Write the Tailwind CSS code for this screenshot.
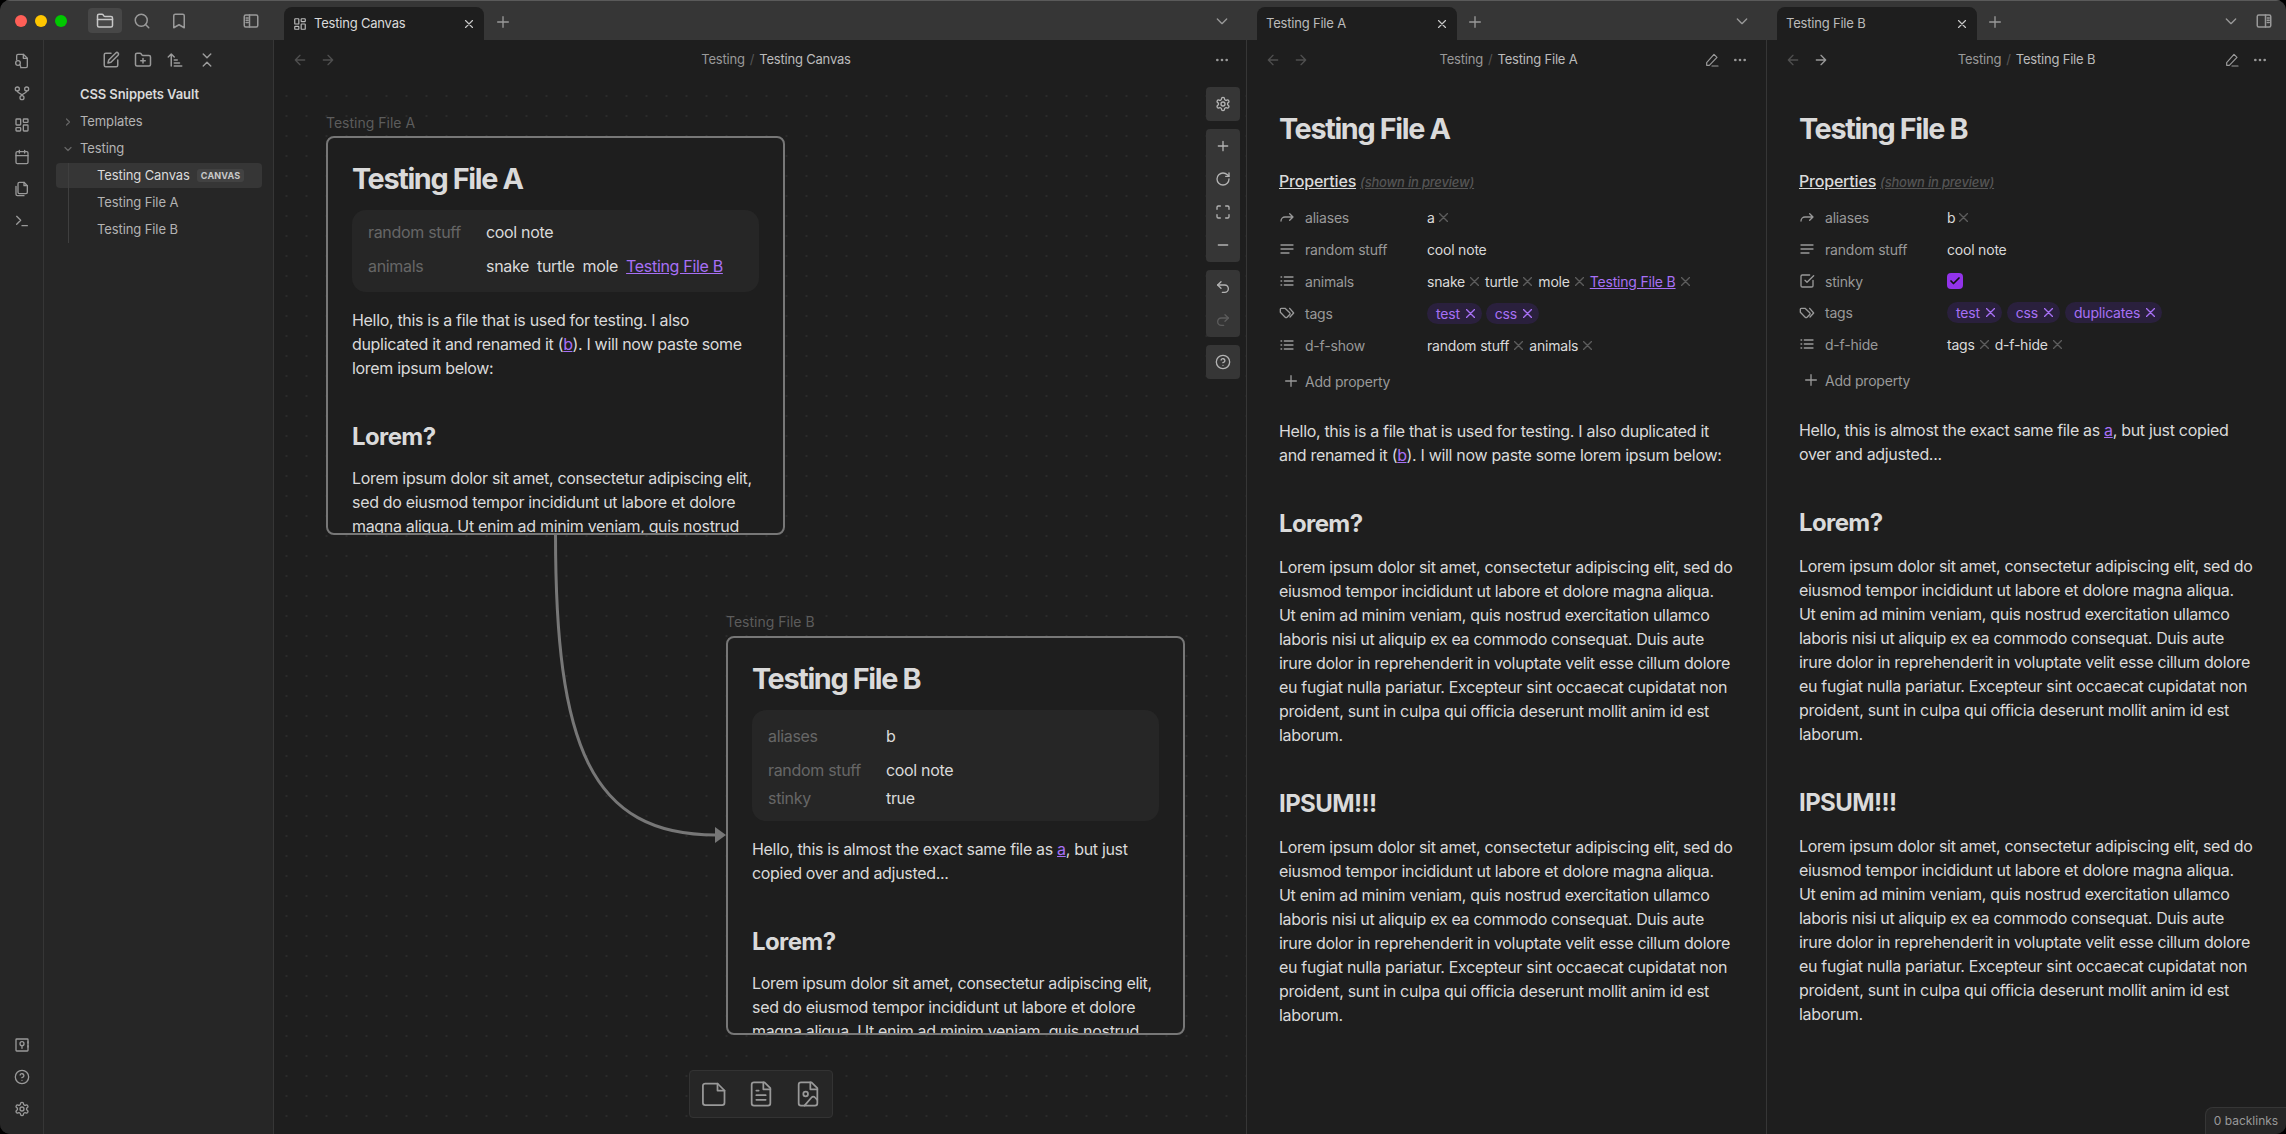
<!DOCTYPE html>
<html lang="en">
<head>
<meta charset="UTF-8">
<title>Testing Canvas - CSS Snippets Vault</title>
<script src="https://cdn.jsdelivr.net/npm/@tailwindcss/browser@4"></script>
</head>
<body class="bg-black [font-family:Inter,sans-serif] antialiased">
<div class="w-[2286px] h-[1134px] overflow-hidden flex flex-col rounded-[10px] bg-[#1e1e1e] text-[#dadada]">

  <!-- title bar -->
  <div class="h-[40px] shrink-0 flex bg-[#363636] border-t border-[#5a5a5a] tracking-[-0.2px]">
    <div class="w-[274px] shrink-0 flex items-center relative">
      <div class="flex gap-[8px] ml-[15px]">
        <span class="w-[12px] h-[12px] rounded-full bg-[#ff5f57]"></span>
        <span class="w-[12px] h-[12px] rounded-full bg-[#ffc700]"></span>
        <span class="w-[12px] h-[12px] rounded-full bg-[#00c800]"></span>
      </div>
      <div class="ml-[21px] w-[34px] h-[25px] rounded-[4px] bg-[#474747] flex items-center justify-center text-[#c8c8c8]">
        <svg class="w-[18px] h-[18px]" viewBox="0 0 24 24" fill="none" stroke="currentColor" stroke-width="2" stroke-linecap="round" stroke-linejoin="round"><path d="M20 20a2 2 0 0 0 2-2V8a2 2 0 0 0-2-2h-7.9a2 2 0 0 1-1.7-.9l-.8-1.2A2 2 0 0 0 7.9 3H4a2 2 0 0 0-2 2v13a2 2 0 0 0 2 2Z"/><path d="M2 10h20"/></svg>
      </div>
      <svg class="w-[18px] h-[18px] ml-[11px] text-[#999]" viewBox="0 0 24 24" fill="none" stroke="currentColor" stroke-width="2" stroke-linecap="round" stroke-linejoin="round"><circle cx="11" cy="11" r="8"/><path d="m21 21-4.3-4.3"/></svg>
      <svg class="w-[18px] h-[18px] ml-[19px] text-[#999]" viewBox="0 0 24 24" fill="none" stroke="currentColor" stroke-width="2" stroke-linecap="round" stroke-linejoin="round"><path d="m19 21-7-4-7 4V5a2 2 0 0 1 2-2h10a2 2 0 0 1 2 2v16z"/></svg>
      <svg class="w-[18px] h-[18px] ml-[54px] text-[#999]" viewBox="0 0 24 24" fill="none" stroke="currentColor" stroke-width="2" stroke-linecap="round" stroke-linejoin="round"><rect x="3" y="4" width="18" height="16" rx="2"/><path d="M10 4v16M5.500 8H8M5.500 11H8M5.500 14H8"/></svg>
    </div>
    <!-- canvas tabs -->
    <div class="w-[973px] shrink-0 flex items-end pl-[10px] relative">
      <div class="w-[200px] h-[33px] rounded-t-[8px] bg-[#1e1e1e] flex items-center pl-[9px] pr-[8px] text-[13px]">
        <svg class="w-[14px] h-[14px] text-[#bbb] mr-[7px]" viewBox="0 0 24 24" fill="none" stroke="currentColor" stroke-width="2" stroke-linecap="round" stroke-linejoin="round"><rect x="3" y="3" width="7" height="9" rx="1"/><rect x="14" y="3" width="7" height="5" rx="1"/><rect x="14" y="12" width="7" height="9" rx="1"/><rect x="3" y="16" width="7" height="5" rx="1"/></svg>
        <span class="flex-1">Testing Canvas</span>
        <svg class="w-[14px] h-[14px] text-[#c8c8c8]" viewBox="0 0 24 24" fill="none" stroke="currentColor" stroke-width="2" stroke-linecap="round"><path d="M18 6 6 18M6 6l12 12"/></svg>
      </div>
      <svg class="w-[16px] h-[16px] ml-[11px] mb-[10px] text-[#999]" viewBox="0 0 24 24" fill="none" stroke="currentColor" stroke-width="2" stroke-linecap="round"><path d="M12 4v16M4 12h16"/></svg>
      <svg class="absolute right-[17px] top-[12px] w-[16px] h-[16px] text-[#999]" viewBox="0 0 24 24" fill="none" stroke="currentColor" stroke-width="2" stroke-linecap="round" stroke-linejoin="round"><path d="m5 9 7 7 7-7"/></svg>
    </div>
    <!-- pane A tabs -->
    <div class="w-[520px] shrink-0 flex items-end pl-[10px] relative">
      <div class="w-[200px] h-[33px] rounded-t-[8px] bg-[#1e1e1e] flex items-center pl-[9px] pr-[8px] text-[13px]">
        <span class="flex-1 text-[#bbb]">Testing File A</span>
        <svg class="w-[14px] h-[14px] text-[#c8c8c8]" viewBox="0 0 24 24" fill="none" stroke="currentColor" stroke-width="2" stroke-linecap="round"><path d="M18 6 6 18M6 6l12 12"/></svg>
      </div>
      <svg class="w-[16px] h-[16px] ml-[10px] mb-[10px] text-[#999]" viewBox="0 0 24 24" fill="none" stroke="currentColor" stroke-width="2" stroke-linecap="round"><path d="M12 4v16M4 12h16"/></svg>
      <svg class="absolute right-[17px] top-[12px] w-[16px] h-[16px] text-[#999]" viewBox="0 0 24 24" fill="none" stroke="currentColor" stroke-width="2" stroke-linecap="round" stroke-linejoin="round"><path d="m5 9 7 7 7-7"/></svg>
    </div>
    <!-- pane B tabs -->
    <div class="flex-1 flex items-end pl-[10px] relative">
      <div class="w-[200px] h-[33px] rounded-t-[8px] bg-[#1e1e1e] flex items-center pl-[9px] pr-[8px] text-[13px]">
        <span class="flex-1 text-[#bbb]">Testing File B</span>
        <svg class="w-[14px] h-[14px] text-[#c8c8c8]" viewBox="0 0 24 24" fill="none" stroke="currentColor" stroke-width="2" stroke-linecap="round"><path d="M18 6 6 18M6 6l12 12"/></svg>
      </div>
      <svg class="w-[16px] h-[16px] ml-[10px] mb-[10px] text-[#999]" viewBox="0 0 24 24" fill="none" stroke="currentColor" stroke-width="2" stroke-linecap="round"><path d="M12 4v16M4 12h16"/></svg>
      <svg class="absolute right-[47px] top-[12px] w-[16px] h-[16px] text-[#999]" viewBox="0 0 24 24" fill="none" stroke="currentColor" stroke-width="2" stroke-linecap="round" stroke-linejoin="round"><path d="m5 9 7 7 7-7"/></svg>
      <svg class="absolute right-[13px] top-[11px] w-[18px] h-[18px] text-[#999]" viewBox="0 0 24 24" fill="none" stroke="currentColor" stroke-width="2" stroke-linecap="round" stroke-linejoin="round"><rect x="3" y="4" width="18" height="16" rx="2"/><path d="M14 4v16M16.500 8H19M16.500 11H19M16.500 14H19"/></svg>
    </div>
  </div>

  <div class="flex-1 flex min-h-0">
    <!-- ribbon -->
    <div class="w-[44px] shrink-0 bg-[#262626] border-r border-[#363636] flex flex-col items-center pt-[13px] pb-[17px] text-[#999]">
      <div class="flex flex-col gap-[16px]">
        <svg class="w-[16px] h-[16px]" viewBox="0 0 24 24" fill="none" stroke="currentColor" stroke-width="2" stroke-linecap="round" stroke-linejoin="round"><path d="M4 10V4a2 2 0 0 1 2-2h8l6 6v12a2 2 0 0 1-2 2h-8"/><path d="M14 2v6h6"/><circle cx="6" cy="15" r="3.500"/><path d="m10 20-1.500-2.500"/></svg>
        <svg class="w-[16px] h-[16px]" viewBox="0 0 24 24" fill="none" stroke="currentColor" stroke-width="2" stroke-linecap="round" stroke-linejoin="round"><circle cx="5" cy="6" r="3"/><circle cx="19" cy="6" r="3"/><circle cx="12" cy="19" r="3"/><path d="M5 9c0 4 7 3 7 7M19 9c0 4-7 3-7 7"/></svg>
        <svg class="w-[16px] h-[16px]" viewBox="0 0 24 24" fill="none" stroke="currentColor" stroke-width="2" stroke-linecap="round" stroke-linejoin="round"><rect x="3" y="3" width="7" height="9" rx="1"/><rect x="14" y="3" width="7" height="5" rx="1"/><rect x="14" y="12" width="7" height="9" rx="1"/><rect x="3" y="16" width="7" height="5" rx="1"/></svg>
        <svg class="w-[16px] h-[16px]" viewBox="0 0 24 24" fill="none" stroke="currentColor" stroke-width="2" stroke-linecap="round" stroke-linejoin="round"><rect x="3" y="4" width="18" height="18" rx="2"/><path d="M16 2v4M8 2v4M3 10h18"/></svg>
        <svg class="w-[16px] h-[16px]" viewBox="0 0 24 24" fill="none" stroke="currentColor" stroke-width="2" stroke-linecap="round" stroke-linejoin="round"><path d="M8 2h7l5 5v10a2 2 0 0 1-2 2H8a2 2 0 0 1-2-2V4a2 2 0 0 1 2-2Z"/><path d="M15 2v5h5"/><path d="M3 8v12a2 2 0 0 0 2 2h10"/></svg>
        <svg class="w-[16px] h-[16px]" viewBox="0 0 24 24" fill="none" stroke="currentColor" stroke-width="2" stroke-linecap="round" stroke-linejoin="round"><path d="m4 17 6-6-6-6M12 19h8"/></svg>
      </div>
      <div class="mt-auto flex flex-col gap-[16px]">
        <svg class="w-[16px] h-[16px]" viewBox="0 0 24 24" fill="none" stroke="currentColor" stroke-width="2" stroke-linecap="round" stroke-linejoin="round"><rect x="3" y="3" width="18" height="18" rx="1"/><circle cx="12" cy="10" r="3"/><path d="M12 13v4M21 7v2M21 13v2"/></svg>
        <svg class="w-[16px] h-[16px]" viewBox="0 0 24 24" fill="none" stroke="currentColor" stroke-width="2" stroke-linecap="round" stroke-linejoin="round"><circle cx="12" cy="12" r="10"/><path d="M9.100 9a3 3 0 0 1 5.800 1c0 2-3 3-3 3M12 17h0"/></svg>
        <svg class="w-[16px] h-[16px]" viewBox="0 0 24 24" fill="none" stroke="currentColor" stroke-width="2" stroke-linecap="round" stroke-linejoin="round"><path d="M12.200 2h-.4a2 2 0 0 0-2 2v.2a2 2 0 0 1-1 1.700l-.4.3a2 2 0 0 1-2 0l-.2-.1a2 2 0 0 0-2.700.7l-.2.4a2 2 0 0 0 .7 2.700l.2.1a2 2 0 0 1 1 1.700v.5a2 2 0 0 1-1 1.700l-.2.1a2 2 0 0 0-.7 2.700l.2.4a2 2 0 0 0 2.700.7l.2-.1a2 2 0 0 1 2 0l.4.3a2 2 0 0 1 1 1.700v.2a2 2 0 0 0 2 2h.4a2 2 0 0 0 2-2v-.2a2 2 0 0 1 1-1.700l.4-.3a2 2 0 0 1 2 0l.2.1a2 2 0 0 0 2.700-.7l.2-.4a2 2 0 0 0-.7-2.700l-.2-.1a2 2 0 0 1-1-1.700v-.5a2 2 0 0 1 1-1.700l.2-.1a2 2 0 0 0 .7-2.700l-.2-.4a2 2 0 0 0-2.700-.7l-.2.1a2 2 0 0 1-2 0l-.4-.3a2 2 0 0 1-1-1.700V4a2 2 0 0 0-2-2Z"/><circle cx="12" cy="12" r="3"/></svg>
      </div>
    </div>

    <!-- file explorer -->
    <div class="w-[230px] shrink-0 bg-[#262626] border-r border-[#363636] text-[13px] tracking-[-0.1px]">
      <div class="flex items-center h-[40px] pl-[58px] gap-[14px] text-[#999]">
        <svg class="w-[18px] h-[18px]" viewBox="0 0 24 24" fill="none" stroke="currentColor" stroke-width="2" stroke-linecap="round" stroke-linejoin="round"><path d="M12 3H5a2 2 0 0 0-2 2v14a2 2 0 0 0 2 2h14a2 2 0 0 0 2-2v-7"/><path d="M18.400 2.600a2.100 2.100 0 1 1 3 3L12 15l-4 1 1-4Z"/></svg>
        <svg class="w-[18px] h-[18px]" viewBox="0 0 24 24" fill="none" stroke="currentColor" stroke-width="2" stroke-linecap="round" stroke-linejoin="round"><path d="M4 20h16a2 2 0 0 0 2-2V8a2 2 0 0 0-2-2h-7.900a2 2 0 0 1-1.700-.9l-.8-1.200A2 2 0 0 0 7.900 3H4a2 2 0 0 0-2 2v13c0 1.100.9 2 2 2Z"/><path d="M12 10v6M9 13h6"/></svg>
        <svg class="w-[18px] h-[18px]" viewBox="0 0 24 24" fill="none" stroke="currentColor" stroke-width="2" stroke-linecap="round" stroke-linejoin="round"><path d="m3 8 4-4 4 4M7 4v16M11 12h4M11 16h7M11 20h10"/></svg>
        <svg class="w-[18px] h-[18px]" viewBox="0 0 24 24" fill="none" stroke="currentColor" stroke-width="2" stroke-linecap="round" stroke-linejoin="round"><path d="m7 20 5-5 5 5M7 4l5 5 5-5"/></svg>
      </div>
      <div class="pl-[12px] pr-[11px] mt-[1px]">
        <div class="h-[27px] pl-[24px] flex items-center font-semibold">CSS Snippets Vault</div>
        <div class="h-[27px] flex items-center text-[#b3b3b3] relative pl-[24px]">
          <svg class="absolute left-[6px] w-[12px] h-[12px] text-[#666]" viewBox="0 0 24 24" fill="none" stroke="currentColor" stroke-width="2.500" stroke-linecap="round" stroke-linejoin="round"><path d="m9 18 6-6-6-6"/></svg>
          Templates
        </div>
        <div class="h-[27px] flex items-center text-[#b3b3b3] relative pl-[24px]">
          <svg class="absolute left-[6px] w-[12px] h-[12px] text-[#666]" viewBox="0 0 24 24" fill="none" stroke="currentColor" stroke-width="2.500" stroke-linecap="round" stroke-linejoin="round"><path d="m6 9 6 6 6-6"/></svg>
          Testing
        </div>
        <div class="relative">
          <div class="absolute left-[12px] top-0 bottom-0 w-px bg-[#3f3f3f]"></div>
          <div class="h-[25px] mt-[1px] mb-[1px] rounded-[4px] bg-[#363636] flex items-center pl-[41px] text-[#dadada]">
            Testing Canvas
            <span class="ml-[7px] px-[4px] h-[13px] rounded-[3px] bg-[#424242] text-[9px] font-bold tracking-[0.02em] flex items-center text-[#c8c8c8]">CANVAS</span>
          </div>
          <div class="h-[27px] flex items-center pl-[41px] text-[#b3b3b3]">Testing File A</div>
          <div class="h-[27px] flex items-center pl-[41px] text-[#b3b3b3]">Testing File B</div>
        </div>
      </div>
    </div>

    <!-- canvas pane -->
    <div class="w-[973px] shrink-0 flex flex-col border-r border-[#363636]">
      <div class="h-[40px] shrink-0 flex items-center relative pl-[18px] pr-[10px] text-[#999]">
        <svg class="w-[16px] h-[16px] text-[#4f4f4f]" viewBox="0 0 24 24" fill="none" stroke="currentColor" stroke-width="2" stroke-linecap="round" stroke-linejoin="round"><path d="m12 19-7-7 7-7M19 12H5"/></svg>
        <svg class="w-[16px] h-[16px] ml-[12px] text-[#4f4f4f]" viewBox="0 0 24 24" fill="none" stroke="currentColor" stroke-width="2" stroke-linecap="round" stroke-linejoin="round"><path d="M5 12h14M12 5l7 7-7 7"/></svg>
        <div class="flex-1 text-center text-[13px] tracking-[-0.2px] pl-[2px]"><span class="text-[#999]">Testing</span><span class="text-[#555] mx-[5px]">/</span><span class="text-[#bbb]">Testing Canvas</span></div>
        <svg class="w-[16px] h-[16px] mr-[6px]" viewBox="0 0 24 24" fill="currentColor"><circle cx="5" cy="12" r="2"/><circle cx="12" cy="12" r="2"/><circle cx="19" cy="12" r="2"/></svg>
      </div>
      <div class="flex-1 relative bg-[radial-gradient(circle,#2b2b2b_1px,transparent_1.2px)] bg-[length:20px_20px] bg-[position:2.5px_6px]">
        <!-- connection -->
        <svg class="absolute left-0 top-0 w-full h-full pointer-events-none" fill="none">
          <path d="M281.500 454 C281.500 665 316 755 442 755" stroke="#777" stroke-width="3"/>
          <path d="M441 747 L452 755 L441 763 Z" fill="#777"/>
        </svg>

        <!-- node A -->
        <div class="absolute left-[52px] top-[32px] text-[14px] text-[#5c5c5c]">Testing File A</div>
        <div class="absolute left-[52px] top-[56px] w-[459px] h-[399px] rounded-[8px] border-2 border-[#777] bg-[#1e1e1e] overflow-hidden px-[24px]">
          <h1 class="text-[28.8px] font-bold leading-[36px] tracking-[-1.35px] mt-[23px]">Testing File A</h1>
          <div class="mt-[13px] rounded-[14px] bg-[#262626] px-[16px] h-[82px] pt-[5px] text-[16px] tracking-[-0.32px]">
            <div class="flex h-[34px] items-center"><span class="w-[118px] text-[#666]">random stuff</span><span>cool note</span></div>
            <div class="flex h-[34px] items-center"><span class="w-[118px] text-[#666]">animals</span><span>snake</span><span class="ml-[8px]">turtle</span><span class="ml-[8px]">mole</span><a class="ml-[8px] text-[#a770f5] underline">Testing File B</a></div>
          </div>
          <p class="mt-[16px] text-[16px] leading-[24px] tracking-[-0.32px]">Hello, this is a file that is used for testing. I also duplicated it and renamed it (<a class="text-[#a770f5] underline">b</a>). I will now paste some lorem ipsum below:</p>
          <h2 class="mt-[41px] text-[24px] font-bold leading-[32px] tracking-[-0.6px]">Lorem?</h2>
          <p class="mt-[13px] text-[16px] leading-[24px] tracking-[-0.32px]">Lorem ipsum dolor sit amet, consectetur adipiscing elit, sed do eiusmod tempor incididunt ut labore et dolore magna aliqua. Ut enim ad minim veniam, quis nostrud exercitation ullamco laboris</p>
        </div>

        <!-- node B -->
        <div class="absolute left-[452px] top-[531px] text-[14px] text-[#5c5c5c]">Testing File B</div>
        <div class="absolute left-[452px] top-[556px] w-[459px] h-[399px] rounded-[8px] border-2 border-[#777] bg-[#1e1e1e] overflow-hidden px-[24px]">
          <h1 class="text-[28.8px] font-bold leading-[36px] tracking-[-1.35px] mt-[23px]">Testing File B</h1>
          <div class="mt-[13px] rounded-[14px] bg-[#262626] px-[16px] h-[111px] pt-[9px] text-[16px] tracking-[-0.32px]">
            <div class="flex h-[34px] items-center"><span class="w-[118px] text-[#666]">aliases</span><span>b</span></div>
            <div class="flex h-[34px] items-center"><span class="w-[118px] text-[#666]">random stuff</span><span>cool note</span></div>
            <div class="flex h-[22px] items-center"><span class="w-[118px] text-[#666]">stinky</span><span>true</span></div>
          </div>
          <p class="mt-[16px] text-[16px] leading-[24px] tracking-[-0.32px]">Hello, this is almost the exact same file as <a class="text-[#a770f5] underline">a</a>, but just copied over and adjusted...</p>
          <h2 class="mt-[41px] text-[24px] font-bold leading-[32px] tracking-[-0.6px]">Lorem?</h2>
          <p class="mt-[13px] text-[16px] leading-[24px] tracking-[-0.32px]">Lorem ipsum dolor sit amet, consectetur adipiscing elit, sed do eiusmod tempor incididunt ut labore et dolore magna aliqua. Ut enim ad minim veniam, quis nostrud exercitation ullamco laboris</p>
        </div>

        <!-- canvas controls -->
        <div class="absolute right-[6px] top-[7px] flex flex-col gap-[8px] w-[34px] text-[#b3b3b3]">
          <div class="h-[34px] rounded-[4px] bg-[#363636] flex items-center justify-center">
            <svg class="w-[16px] h-[16px]" viewBox="0 0 24 24" fill="none" stroke="currentColor" stroke-width="2" stroke-linecap="round" stroke-linejoin="round"><path d="M12.200 2h-.4a2 2 0 0 0-2 2v.2a2 2 0 0 1-1 1.700l-.4.3a2 2 0 0 1-2 0l-.2-.1a2 2 0 0 0-2.700.7l-.2.4a2 2 0 0 0 .7 2.700l.2.1a2 2 0 0 1 1 1.700v.5a2 2 0 0 1-1 1.700l-.2.1a2 2 0 0 0-.7 2.700l.2.4a2 2 0 0 0 2.700.7l.2-.1a2 2 0 0 1 2 0l.4.3a2 2 0 0 1 1 1.700v.2a2 2 0 0 0 2 2h.4a2 2 0 0 0 2-2v-.2a2 2 0 0 1 1-1.700l.4-.3a2 2 0 0 1 2 0l.2.1a2 2 0 0 0 2.700-.7l.2-.4a2 2 0 0 0-.7-2.700l-.2-.1a2 2 0 0 1-1-1.700v-.5a2 2 0 0 1 1-1.700l.2-.1a2 2 0 0 0 .7-2.700l-.2-.4a2 2 0 0 0-2.700-.7l-.2.1a2 2 0 0 1-2 0l-.4-.3a2 2 0 0 1-1-1.700V4a2 2 0 0 0-2-2Z"/><circle cx="12" cy="12" r="3"/></svg>
          </div>
          <div class="h-[133px] rounded-[4px] bg-[#363636] flex flex-col items-center justify-around py-[1px]">
            <svg class="w-[16px] h-[16px]" viewBox="0 0 24 24" fill="none" stroke="currentColor" stroke-width="2" stroke-linecap="round"><path d="M12 5v14M5 12h14"/></svg>
            <svg class="w-[16px] h-[16px]" viewBox="0 0 24 24" fill="none" stroke="currentColor" stroke-width="2" stroke-linecap="round" stroke-linejoin="round"><path d="M21 12a9 9 0 1 1-9-9c2.500 0 4.800 1 6.700 2.700L21 8"/><path d="M21 3v5h-5"/></svg>
            <svg class="w-[16px] h-[16px]" viewBox="0 0 24 24" fill="none" stroke="currentColor" stroke-width="2" stroke-linecap="round" stroke-linejoin="round"><path d="M8 3H5a2 2 0 0 0-2 2v3M21 8V5a2 2 0 0 0-2-2h-3M3 16v3a2 2 0 0 0 2 2h3M16 21h3a2 2 0 0 0 2-2v-3"/></svg>
            <svg class="w-[16px] h-[16px]" viewBox="0 0 24 24" fill="none" stroke="currentColor" stroke-width="2" stroke-linecap="round"><path d="M5 12h14"/></svg>
          </div>
          <div class="h-[67px] rounded-[4px] bg-[#363636] flex flex-col items-center justify-around py-[1px]">
            <svg class="w-[16px] h-[16px]" viewBox="0 0 24 24" fill="none" stroke="currentColor" stroke-width="2" stroke-linecap="round" stroke-linejoin="round"><path d="M9 14 4 9l5-5"/><path d="M4 9h10.500a5.500 5.500 0 0 1 0 11H11"/></svg>
            <svg class="w-[16px] h-[16px] text-[#5c5c5c]" viewBox="0 0 24 24" fill="none" stroke="currentColor" stroke-width="2" stroke-linecap="round" stroke-linejoin="round"><path d="m15 14 5-5-5-5"/><path d="M20 9H9.500a5.500 5.500 0 0 0 0 11H13"/></svg>
          </div>
          <div class="h-[34px] rounded-[4px] bg-[#363636] flex items-center justify-center">
            <svg class="w-[16px] h-[16px]" viewBox="0 0 24 24" fill="none" stroke="currentColor" stroke-width="2" stroke-linecap="round" stroke-linejoin="round"><circle cx="12" cy="12" r="10"/><path d="M9.100 9a3 3 0 0 1 5.800 1c0 2-3 3-3 3M12 17h0"/></svg>
          </div>
        </div>

        <!-- card menu -->
        <div class="absolute left-[415px] top-[990px] w-[144px] h-[48px] rounded-[4px] bg-[#262626] border border-[#333] flex items-center justify-center gap-[19px] text-[#999]">
          <svg class="w-[28px] h-[28px]" viewBox="0 0 24 24" fill="none" stroke="currentColor" stroke-width="1.500" stroke-linecap="round" stroke-linejoin="round"><path d="M4.500 3h10.500l6 6v10.500a2 2 0 0 1-2 2H4.500a2 2 0 0 1-2-2V5a2 2 0 0 1 2-2Z"/><path d="M15 3v6h6"/></svg>
          <svg class="w-[28px] h-[28px]" viewBox="0 0 24 24" fill="none" stroke="currentColor" stroke-width="1.500" stroke-linecap="round" stroke-linejoin="round"><path d="M15 2H6a2 2 0 0 0-2 2v16a2 2 0 0 0 2 2h12a2 2 0 0 0 2-2V7Z"/><path d="M14 2v6h6M8 9h2M8 13h8M8 17h8"/></svg>
          <svg class="w-[28px] h-[28px]" viewBox="0 0 24 24" fill="none" stroke="currentColor" stroke-width="1.500" stroke-linecap="round" stroke-linejoin="round"><path d="M15 2H6a2 2 0 0 0-2 2v16a2 2 0 0 0 2 2h12a2 2 0 0 0 2-2V7Z"/><path d="M14 2v6h6"/><circle cx="10" cy="12" r="2"/><path d="m20 17-2-2a2 2 0 0 0-3 0l-6 7"/></svg>
        </div>
      </div>
    </div>

    <!-- file A pane -->
    <div class="w-[520px] shrink-0 flex flex-col border-r border-[#363636]">
      <div class="h-[40px] shrink-0 flex items-center px-[18px] text-[#999]">
        <svg class="w-[16px] h-[16px] text-[#4f4f4f]" viewBox="0 0 24 24" fill="none" stroke="currentColor" stroke-width="2" stroke-linecap="round" stroke-linejoin="round"><path d="m12 19-7-7 7-7M19 12H5"/></svg>
        <svg class="w-[16px] h-[16px] ml-[12px] text-[#4f4f4f]" viewBox="0 0 24 24" fill="none" stroke="currentColor" stroke-width="2" stroke-linecap="round" stroke-linejoin="round"><path d="M5 12h14M12 5l7 7-7 7"/></svg>
        <div class="flex-1 text-center text-[13px] tracking-[-0.2px] pl-[4px]"><span class="text-[#999]">Testing</span><span class="text-[#555] mx-[5px]">/</span><span class="text-[#bbb]">Testing File A</span></div>
        <svg class="w-[16px] h-[16px]" viewBox="0 0 24 24" fill="none" stroke="currentColor" stroke-width="1.800" stroke-linecap="round" stroke-linejoin="round"><path d="M15 3.500 19.500 8 8 20H4v-4ZM12 21h9"/></svg>
        <svg class="w-[16px] h-[16px] ml-[12px]" viewBox="0 0 24 24" fill="currentColor"><circle cx="5" cy="12" r="2"/><circle cx="12" cy="12" r="2"/><circle cx="19" cy="12" r="2"/></svg>
      </div>
      <div class="pl-[32px] pr-[32px]">
        <h1 class="text-[28.8px] font-bold leading-[36px] tracking-[-1.35px] mt-[31px]">Testing File A</h1>
        <div class="mt-[22px] h-[24px] flex items-baseline"><span class="text-[16px] font-medium underline leading-[24px] tracking-[-0.2px]">Properties</span><span class="ml-[4px] text-[13px] font-medium italic text-[#555] underline tracking-[-0.2px]">(shown in preview)</span></div>

        <div class="mt-[8px] text-[14px] tracking-[-0.2px]">
          <div class="flex items-center h-[32px]">
            <svg class="w-[16px] h-[16px] text-[#999] mr-[10px]" viewBox="0 0 24 24" fill="none" stroke="currentColor" stroke-width="2" stroke-linecap="round" stroke-linejoin="round"><path d="m16 7 5 5-5 5M21 12H9a6 6 0 0 0-6 6"/></svg>
            <span class="w-[122px] text-[#999]">aliases</span><span>a</span>
            <svg class="w-[9px] h-[9px] ml-[4px] text-[#5c5c5c]" viewBox="6 6 12 12" fill="none" stroke="currentColor" stroke-width="1.800" stroke-linecap="round"><path d="M18 6 6 18M6 6l12 12"/></svg>
          </div>
          <div class="flex items-center h-[32px]">
            <svg class="w-[16px] h-[16px] text-[#999] mr-[10px]" viewBox="0 0 24 24" fill="none" stroke="currentColor" stroke-width="2" stroke-linecap="round"><path d="M3 6h18M3 12h18M3 18h12"/></svg>
            <span class="w-[122px] text-[#999]">random stuff</span><span>cool note</span>
          </div>
          <div class="flex items-center h-[32px]">
            <svg class="w-[16px] h-[16px] text-[#999] mr-[10px]" viewBox="0 0 24 24" fill="none" stroke="currentColor" stroke-width="2" stroke-linecap="round"><path d="M3 6h1M3 12h1M3 18h1M8 6h13M8 12h13M8 18h13"/></svg>
            <span class="w-[122px] text-[#999]">animals</span>
            <span>snake</span><svg class="w-[9px] h-[9px] ml-[5px] text-[#5c5c5c]" viewBox="6 6 12 12" fill="none" stroke="currentColor" stroke-width="1.800" stroke-linecap="round"><path d="M18 6 6 18M6 6l12 12"/></svg>
            <span class="ml-[6px]">turtle</span><svg class="w-[9px] h-[9px] ml-[5px] text-[#5c5c5c]" viewBox="6 6 12 12" fill="none" stroke="currentColor" stroke-width="1.800" stroke-linecap="round"><path d="M18 6 6 18M6 6l12 12"/></svg>
            <span class="ml-[6px]">mole</span><svg class="w-[9px] h-[9px] ml-[5px] text-[#5c5c5c]" viewBox="6 6 12 12" fill="none" stroke="currentColor" stroke-width="1.800" stroke-linecap="round"><path d="M18 6 6 18M6 6l12 12"/></svg>
            <a class="ml-[6px] text-[#a770f5] underline">Testing File B</a><svg class="w-[9px] h-[9px] ml-[5px] text-[#5c5c5c]" viewBox="6 6 12 12" fill="none" stroke="currentColor" stroke-width="1.800" stroke-linecap="round"><path d="M18 6 6 18M6 6l12 12"/></svg>
          </div>
          <div class="flex items-center h-[32px]">
            <svg class="w-[16px] h-[16px] text-[#999] mr-[10px]" viewBox="0 0 24 24" fill="none" stroke="currentColor" stroke-width="2" stroke-linecap="round" stroke-linejoin="round"><path d="M9 5H3.500A1.500 1.500 0 0 0 2 6.500V11l7.300 7.300a2 2 0 0 0 2.800 0l4-4a2 2 0 0 0 0-2.800Z"/><path d="m16 5 6 7-5.500 6"/></svg>
            <span class="w-[122px] text-[#999]">tags</span>
            <span class="h-[21px] rounded-full bg-[#2a203d] text-[#a770f5] pl-[9px] pr-[7px] flex items-center gap-[6px]">test <svg class="w-[9px] h-[9px]" viewBox="6 6 12 12" fill="none" stroke="currentColor" stroke-width="1.800" stroke-linecap="round"><path d="M18 6 6 18M6 6l12 12"/></svg></span>
            <span class="h-[21px] rounded-full bg-[#2a203d] text-[#a770f5] pl-[9px] pr-[7px] flex items-center gap-[6px] ml-[4px]">css <svg class="w-[9px] h-[9px]" viewBox="6 6 12 12" fill="none" stroke="currentColor" stroke-width="1.800" stroke-linecap="round"><path d="M18 6 6 18M6 6l12 12"/></svg></span>
          </div>
          <div class="flex items-center h-[32px]">
            <svg class="w-[16px] h-[16px] text-[#999] mr-[10px]" viewBox="0 0 24 24" fill="none" stroke="currentColor" stroke-width="2" stroke-linecap="round"><path d="M3 6h1M3 12h1M3 18h1M8 6h13M8 12h13M8 18h13"/></svg>
            <span class="w-[122px] text-[#999]">d-f-show</span>
            <span>random stuff</span><svg class="w-[9px] h-[9px] ml-[5px] text-[#5c5c5c]" viewBox="6 6 12 12" fill="none" stroke="currentColor" stroke-width="1.800" stroke-linecap="round"><path d="M18 6 6 18M6 6l12 12"/></svg>
            <span class="ml-[6px]">animals</span><svg class="w-[9px] h-[9px] ml-[5px] text-[#5c5c5c]" viewBox="6 6 12 12" fill="none" stroke="currentColor" stroke-width="1.800" stroke-linecap="round"><path d="M18 6 6 18M6 6l12 12"/></svg>
          </div>
          <div class="flex items-center h-[32px] mt-[4px] pl-[4px] text-[#999]">
            <svg class="w-[16px] h-[16px] mr-[6px]" viewBox="0 0 24 24" fill="none" stroke="currentColor" stroke-width="2" stroke-linecap="round"><path d="M12 4v16M4 12h16"/></svg>
            Add property
          </div>
        </div>

        <p class="mt-[22px] text-[16px] leading-[24px] tracking-[-0.32px]">Hello, this is a file that is used for testing. I also duplicated it and renamed it (<a class="text-[#a770f5] underline">b</a>). I will now paste some lorem ipsum below:</p>
        <h2 class="mt-[41px] text-[24px] font-bold leading-[32px] tracking-[-0.6px]">Lorem?</h2>
        <p class="mt-[15px] text-[16px] leading-[24px] tracking-[-0.32px]">Lorem ipsum dolor sit amet, consectetur adipiscing elit, sed do eiusmod tempor incididunt ut labore et dolore magna aliqua. Ut enim ad minim veniam, quis nostrud exercitation ullamco laboris nisi ut aliquip ex ea commodo consequat. Duis aute irure dolor in reprehenderit in voluptate velit esse cillum dolore eu fugiat nulla pariatur. Excepteur sint occaecat cupidatat non proident, sunt in culpa qui officia deserunt mollit anim id est laborum.</p>
        <h2 class="mt-[41px] text-[24px] font-bold leading-[32px] tracking-[-0.6px]">IPSUM!!!</h2>
        <p class="mt-[15px] text-[16px] leading-[24px] tracking-[-0.32px]">Lorem ipsum dolor sit amet, consectetur adipiscing elit, sed do eiusmod tempor incididunt ut labore et dolore magna aliqua. Ut enim ad minim veniam, quis nostrud exercitation ullamco laboris nisi ut aliquip ex ea commodo consequat. Duis aute irure dolor in reprehenderit in voluptate velit esse cillum dolore eu fugiat nulla pariatur. Excepteur sint occaecat cupidatat non proident, sunt in culpa qui officia deserunt mollit anim id est laborum.</p>
      </div>
    </div>

    <!-- file B pane -->
    <div class="flex-1 flex flex-col relative">
      <div class="h-[40px] shrink-0 flex items-center px-[18px] text-[#999]">
        <svg class="w-[16px] h-[16px] text-[#4f4f4f]" viewBox="0 0 24 24" fill="none" stroke="currentColor" stroke-width="2" stroke-linecap="round" stroke-linejoin="round"><path d="m12 19-7-7 7-7M19 12H5"/></svg>
        <svg class="w-[16px] h-[16px] ml-[12px] text-[#999]" viewBox="0 0 24 24" fill="none" stroke="currentColor" stroke-width="2" stroke-linecap="round" stroke-linejoin="round"><path d="M5 12h14M12 5l7 7-7 7"/></svg>
        <div class="flex-1 text-center text-[13px] tracking-[-0.2px]"><span class="text-[#999]">Testing</span><span class="text-[#555] mx-[5px]">/</span><span class="text-[#bbb]">Testing File B</span></div>
        <svg class="w-[16px] h-[16px]" viewBox="0 0 24 24" fill="none" stroke="currentColor" stroke-width="1.800" stroke-linecap="round" stroke-linejoin="round"><path d="M15 3.500 19.500 8 8 20H4v-4ZM12 21h9"/></svg>
        <svg class="w-[16px] h-[16px] ml-[12px]" viewBox="0 0 24 24" fill="currentColor"><circle cx="5" cy="12" r="2"/><circle cx="12" cy="12" r="2"/><circle cx="19" cy="12" r="2"/></svg>
      </div>
      <div class="pl-[32px] pr-[32px]">
        <h1 class="text-[28.8px] font-bold leading-[36px] tracking-[-1.35px] mt-[31px]">Testing File B</h1>
        <div class="mt-[22px] h-[24px] flex items-baseline"><span class="text-[16px] font-medium underline leading-[24px] tracking-[-0.2px]">Properties</span><span class="ml-[4px] text-[13px] font-medium italic text-[#555] underline tracking-[-0.2px]">(shown in preview)</span></div>

        <div class="mt-[8px] text-[14px] tracking-[-0.2px]">
          <div class="flex items-center h-[32px]">
            <svg class="w-[16px] h-[16px] text-[#999] mr-[10px]" viewBox="0 0 24 24" fill="none" stroke="currentColor" stroke-width="2" stroke-linecap="round" stroke-linejoin="round"><path d="m16 7 5 5-5 5M21 12H9a6 6 0 0 0-6 6"/></svg>
            <span class="w-[122px] text-[#999]">aliases</span><span>b</span>
            <svg class="w-[9px] h-[9px] ml-[4px] text-[#5c5c5c]" viewBox="6 6 12 12" fill="none" stroke="currentColor" stroke-width="1.800" stroke-linecap="round"><path d="M18 6 6 18M6 6l12 12"/></svg>
          </div>
          <div class="flex items-center h-[32px]">
            <svg class="w-[16px] h-[16px] text-[#999] mr-[10px]" viewBox="0 0 24 24" fill="none" stroke="currentColor" stroke-width="2" stroke-linecap="round"><path d="M3 6h18M3 12h18M3 18h12"/></svg>
            <span class="w-[122px] text-[#999]">random stuff</span><span>cool note</span>
          </div>
          <div class="flex items-center h-[32px]">
            <svg class="w-[16px] h-[16px] text-[#999] mr-[10px]" viewBox="0 0 24 24" fill="none" stroke="currentColor" stroke-width="2" stroke-linecap="round" stroke-linejoin="round"><path d="M21 11v8a2 2 0 0 1-2 2H5a2 2 0 0 1-2-2V5a2 2 0 0 1 2-2h11"/><path d="m9 11 3 3L22 4"/></svg>
            <span class="w-[122px] text-[#999]">stinky</span>
            <span class="w-[16px] h-[16px] rounded-[4px] bg-[#9333ea] flex items-center justify-center"><svg class="w-[12px] h-[12px] text-[#111]" viewBox="0 0 24 24" fill="none" stroke="currentColor" stroke-width="3.500" stroke-linecap="round" stroke-linejoin="round"><path d="M20 6 9 17l-5-5"/></svg></span>
          </div>
          <div class="flex items-center h-[31px]">
            <svg class="w-[16px] h-[16px] text-[#999] mr-[10px]" viewBox="0 0 24 24" fill="none" stroke="currentColor" stroke-width="2" stroke-linecap="round" stroke-linejoin="round"><path d="M9 5H3.500A1.500 1.500 0 0 0 2 6.500V11l7.300 7.300a2 2 0 0 0 2.800 0l4-4a2 2 0 0 0 0-2.800Z"/><path d="m16 5 6 7-5.500 6"/></svg>
            <span class="w-[122px] text-[#999]">tags</span>
            <span class="h-[21px] rounded-full bg-[#2a203d] text-[#a770f5] pl-[9px] pr-[7px] flex items-center gap-[6px]">test <svg class="w-[9px] h-[9px]" viewBox="6 6 12 12" fill="none" stroke="currentColor" stroke-width="1.800" stroke-linecap="round"><path d="M18 6 6 18M6 6l12 12"/></svg></span>
            <span class="h-[21px] rounded-full bg-[#2a203d] text-[#a770f5] pl-[9px] pr-[7px] flex items-center gap-[6px] ml-[5px]">css <svg class="w-[9px] h-[9px]" viewBox="6 6 12 12" fill="none" stroke="currentColor" stroke-width="1.800" stroke-linecap="round"><path d="M18 6 6 18M6 6l12 12"/></svg></span>
            <span class="h-[21px] rounded-full bg-[#2a203d] text-[#a770f5] pl-[9px] pr-[7px] flex items-center gap-[6px] ml-[5px]">duplicates <svg class="w-[9px] h-[9px]" viewBox="6 6 12 12" fill="none" stroke="currentColor" stroke-width="1.800" stroke-linecap="round"><path d="M18 6 6 18M6 6l12 12"/></svg></span>
          </div>
          <div class="flex items-center h-[32px]">
            <svg class="w-[16px] h-[16px] text-[#999] mr-[10px]" viewBox="0 0 24 24" fill="none" stroke="currentColor" stroke-width="2" stroke-linecap="round"><path d="M3 6h1M3 12h1M3 18h1M8 6h13M8 12h13M8 18h13"/></svg>
            <span class="w-[122px] text-[#999]">d-f-hide</span>
            <span>tags</span><svg class="w-[9px] h-[9px] ml-[5px] text-[#5c5c5c]" viewBox="6 6 12 12" fill="none" stroke="currentColor" stroke-width="1.800" stroke-linecap="round"><path d="M18 6 6 18M6 6l12 12"/></svg>
            <span class="ml-[6px]">d-f-hide</span><svg class="w-[9px] h-[9px] ml-[5px] text-[#5c5c5c]" viewBox="6 6 12 12" fill="none" stroke="currentColor" stroke-width="1.800" stroke-linecap="round"><path d="M18 6 6 18M6 6l12 12"/></svg>
          </div>
          <div class="flex items-center h-[32px] mt-[4px] pl-[4px] text-[#999]">
            <svg class="w-[16px] h-[16px] mr-[6px]" viewBox="0 0 24 24" fill="none" stroke="currentColor" stroke-width="2" stroke-linecap="round"><path d="M12 4v16M4 12h16"/></svg>
            Add property
          </div>
        </div>

        <p class="mt-[22px] text-[16px] leading-[24px] tracking-[-0.32px]">Hello, this is almost the exact same file as <a class="text-[#a770f5] underline">a</a>, but just copied over and adjusted...</p>
        <h2 class="mt-[41px] text-[24px] font-bold leading-[32px] tracking-[-0.6px]">Lorem?</h2>
        <p class="mt-[15px] text-[16px] leading-[24px] tracking-[-0.32px]">Lorem ipsum dolor sit amet, consectetur adipiscing elit, sed do eiusmod tempor incididunt ut labore et dolore magna aliqua. Ut enim ad minim veniam, quis nostrud exercitation ullamco laboris nisi ut aliquip ex ea commodo consequat. Duis aute irure dolor in reprehenderit in voluptate velit esse cillum dolore eu fugiat nulla pariatur. Excepteur sint occaecat cupidatat non proident, sunt in culpa qui officia deserunt mollit anim id est laborum.</p>
        <h2 class="mt-[41px] text-[24px] font-bold leading-[32px] tracking-[-0.6px]">IPSUM!!!</h2>
        <p class="mt-[15px] text-[16px] leading-[24px] tracking-[-0.32px]">Lorem ipsum dolor sit amet, consectetur adipiscing elit, sed do eiusmod tempor incididunt ut labore et dolore magna aliqua. Ut enim ad minim veniam, quis nostrud exercitation ullamco laboris nisi ut aliquip ex ea commodo consequat. Duis aute irure dolor in reprehenderit in voluptate velit esse cillum dolore eu fugiat nulla pariatur. Excepteur sint occaecat cupidatat non proident, sunt in culpa qui officia deserunt mollit anim id est laborum.</p>
      </div>
      <div class="absolute right-0 bottom-0 h-[27px] w-[81px] bg-[#262626] border-t border-l border-[#363636] rounded-tl-[8px] text-[12px] text-[#999] flex items-center justify-center">0 backlinks</div>
    </div>
  </div>
</div>
</body>
</html>
